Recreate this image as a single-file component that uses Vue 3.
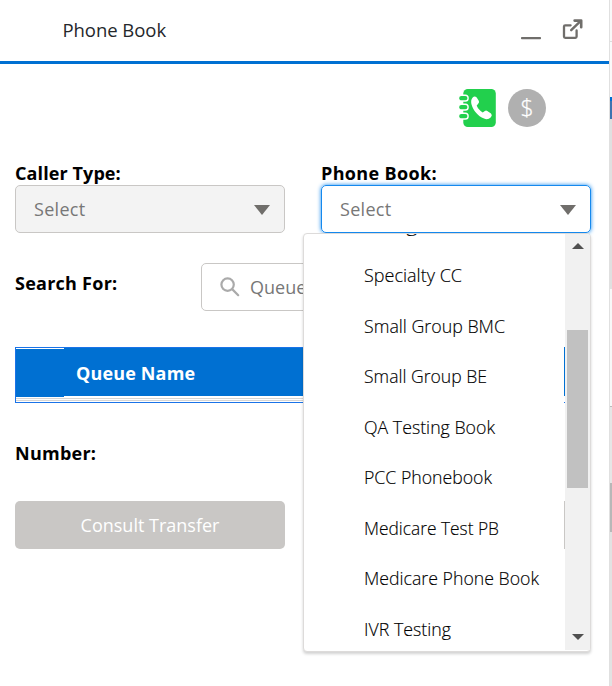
<script setup>
const items = [
  { label: 'Billing CC', w: 83 },
  { label: 'Specialty CC', w: 98 },
  { label: 'Small Group BMC', w: 141 },
  { label: 'Small Group BE', w: 123 },
  { label: 'QA Testing Book', w: 131 },
  { label: 'PCC Phonebook', w: 128 },
  { label: 'Medicare Test PB', w: 135 },
  { label: 'Medicare Phone Book', w: 175 },
  { label: 'IVR Testing', w: 87 },
]
</script>

<template>
  <div class="page">
    <div class="panel">
      <header class="head">
        <span class="title">Phone Book</span>
        <svg class="min" width="20" height="3" viewBox="0 0 20 3"><rect width="20" height="2.2" rx="0.8" fill="#706e6b" /></svg>
        <svg class="pop" width="22" height="22" viewBox="0 0 22 22" fill="none" stroke="#706e6b">
          <path d="M8.6 7.3H3.2Q2 7.3 2 8.5V18.6Q2 19.8 3.2 19.8H13.4Q14.6 19.8 14.6 18.6V12.4" stroke-width="2.3" stroke-linecap="round" />
          <path d="M9.2 12.2L18 3.6" stroke-width="2.4" stroke-linecap="round" />
          <path d="M12.6 2.6H19.2V9.2" stroke-width="2.6" stroke-linecap="round" stroke-linejoin="round" />
        </svg>
      </header>

      <main class="body">
        <div class="tools">
          <svg width="38" height="38" viewBox="0 0 38 38">
            <rect x="4.3" width="32.5" height="38" rx="4.5" fill="#22d04d" />
            <g fill="#22d04d" stroke="#fff" stroke-width="1.4">
              <rect x="-0.5" y="6.2" width="9.6" height="5.8" rx="2.8" />
              <rect x="-0.5" y="15.2" width="9.6" height="5.8" rx="2.8" />
              <rect x="-0.5" y="24.2" width="9.6" height="5.8" rx="2.8" />
            </g>
            <path d="M13.7 8.5Q15.7 6.5 17.7 8.6L19.9 12Q20.5 13.5 19 15L17.7 16.5Q19.2 20.7 23.7 23.4L25.9 21.9Q27.1 21.2 28.3 22L32 24.6Q33.7 26.2 31.9 28.2Q28.9 31.2 25.1 29.6C18.7 27 14.3 21.4 12.7 16Q11.2 11.2 13.7 8.5Z" fill="#fff" />
          </svg>
          <span class="coin">$</span>
        </div>

        <div class="fields">
          <div class="field">
            <label>Caller Type:</label>
            <div class="select off"><span>Select</span><i class="tri"></i></div>
          </div>
          <div class="field">
            <label class="wide">Phone Book:</label>
            <div class="select on"><span>Select</span><i class="tri"></i></div>
          </div>
        </div>

        <div class="search">
          <b>Search For:</b>
          <div class="box">
            <svg width="20" height="20" viewBox="0 0 20 20" fill="none" stroke="#aaa" stroke-width="2.2" stroke-linecap="round">
              <circle cx="7.6" cy="7.6" r="6.2" /><path d="M12.4 12.4L18.2 18.2" />
            </svg>
            <span>Queue</span>
          </div>
        </div>

        <div class="table">
          <div class="corner"></div>
          <div class="th"><span>Queue Name</span></div>
          <div class="lines"></div>
        </div>

        <b class="number">Number:</b>
        <div class="actions">
          <button>Consult Transfer</button>
          <button></button>
        </div>
      </main>
    </div>

    <aside class="rail">
      <i class="r1"></i><i class="r2"></i><i class="r3"></i><i class="r4"></i><i class="r5"></i><i class="r6"></i><i class="r7"></i><i class="r8"></i>
    </aside>

    <div class="menu">
      <div class="list">
        <svg v-for="it in items" :key="it.label" class="item" width="190" height="50.5">
          <text x="0" y="31" :textLength="it.w" lengthAdjust="spacingAndGlyphs">{{ it.label }}</text>
        </svg>
      </div>
      <div class="edge"></div>
      <div class="bar">
        <i class="up"></i>
        <i class="thumb"></i>
        <i class="down"></i>
      </div>
    </div>
  </div>
</template>

<style>
body { overflow: hidden; background: #fff; }
</style>
<style scoped>
* { box-sizing: border-box; }
.page { position: relative; display: flex; width: 612px; height: 686px; overflow: hidden; background: #fff; font-family: "Open Sans", "Noto Sans", sans-serif; font-size: 18px; color: #000; }
.panel { width: 609px; flex: none; }
.head { display: flex; height: 64px; border-bottom: 3px solid #0070d2; padding-left: 62.5px; }
.title { width: 458px; line-height: 60px; font-size: 18.5px; letter-spacing: -0.05px; color: #24272b; }
.min { margin-top: 36.5px; }
.pop { margin: 18px 0 0 21px; }
.body { padding: 25px 18px 0 15px; }
.tools { display: flex; gap: 11px; height: 38px; padding-left: 444px; }
.tools svg { flex: none; }
.coin { width: 38px; height: 38px; flex: none; border-radius: 50%; background: #b0b0b0; color: #fff; font-size: 23px; font-weight: 300; -webkit-text-stroke: 0.25px #fff; line-height: 37px; text-align: center; }
.fields { display: flex; gap: 36px; margin-top: 35px; }
.field { width: 270px; }
label { display: block; height: 23px; line-height: 23px; font-weight: 700; letter-spacing: 0.1px; }
.wide { letter-spacing: 0.35px; }
b { font-weight: 700; white-space: nowrap; letter-spacing: 0.25px; }
.select { display: flex; align-items: center; justify-content: space-between; height: 48px; padding: 0 14px 0 18px; border: 1px solid #c9c7c5; border-radius: 5px; color: #777; letter-spacing: 0.3px; }
.off { background: #f3f3f3; }
.on { border-color: #1589ee; box-shadow: 0 0 4px #1589ee; }
.tri { width: 0; border: 8px solid transparent; border-top: 10px solid #706e6b; border-bottom: 0; margin-top: 2px; }
.search { display: flex; margin-top: 30px; height: 48px; }
.search b { width: 186px; line-height: 40px; }
.box { display: flex; align-items: center; gap: 10px; width: 364px; padding-left: 18px; border: 1px solid #c9c7c5; border-radius: 5px; color: #777; }
.table { display: grid; grid-template-columns: 48px 1fr; grid-template-rows: 49px 5px; margin-top: 36px; height: 56px; width: 550px; border: 1px solid #1a73e8; }
.corner { background: #0070d2; border-top: 1px solid #fff; }
.th { height: 48px; background: #0070d2; color: #fff; font-weight: 700; padding-left: 12px; line-height: 50px; letter-spacing: 0.15px; }
.lines { grid-column: 1 / 3; background: repeating-linear-gradient(#fff 0 1px, #d5d5d5 1px 2px); }
.number { display: block; margin-top: 38px; line-height: 24px; }
.actions { display: flex; gap: 36px; width: 550px; margin-top: 36px; }
button { width: 270px; flex: none; height: 48px; border: 0; border-radius: 5px; background: #c9c7c5; color: #fff; font: inherit; }
.actions button:last-child { width: 244px; }
.rail { display: flex; flex-direction: column; width: 3px; border-left: 1px solid #e0e0e0; }
.rail i { flex: none; }
.r1 { height: 42px; background: #f8f8f8; border-bottom: 1px solid #ddd; }
.r2 { height: 55px; background: #fafafa; }
.r3 { height: 22px; background: #3e74b0; border-top: 4px solid #0070d2; }
.r4 { height: 170px; background: #e0e0e0; }
.r5 { height: 118px; background: #f8f8f8; border-bottom: 1px solid #bbb; }
.r6 { height: 76px; background: #e6e6e6; }
.r7 { height: 49px; background: #b8b8b8; }
.r8 { height: 154px; background: #e2e2e2; }
.menu { position: absolute; left: 303px; top: 233px; width: 288px; height: 419px; display: flex; overflow: hidden; background: #fff; border: 1px solid #dddbda; border-radius: 4px; box-shadow: 0 2px 3px rgba(0,0,0,.18); }
.list { width: 260px; height: 417px; overflow: hidden; display: flex; flex-direction: column; padding-left: 60px; }
.item { flex: none; fill: #000; stroke: #000; stroke-width: 0.15px; font-size: 17.5px; font-weight: 300; }
.item:first-child { margin-top: -33.4px; }
.edge { width: 1px; background: linear-gradient(#fff 113px, #0070d2 113px 162px, #fff 162px 168px, #1a73e8 168px 169px, #fff 169px 267px, #c9c7c5 267px 315px, #fff 315px); }
.bar { display: flex; flex-direction: column; align-items: center; width: 25px; height: 416px; background: #f1f1f1; }
.up { border: 6px solid transparent; border-top: 0; border-bottom: 6px solid #505050; margin-top: 9px; }
.thumb { width: 21px; height: 158px; margin-top: 81px; background: #c1c1c1; }
.down { border: 6px solid transparent; border-bottom: 0; border-top: 6px solid #505050; margin-top: 146px; }
</style>
